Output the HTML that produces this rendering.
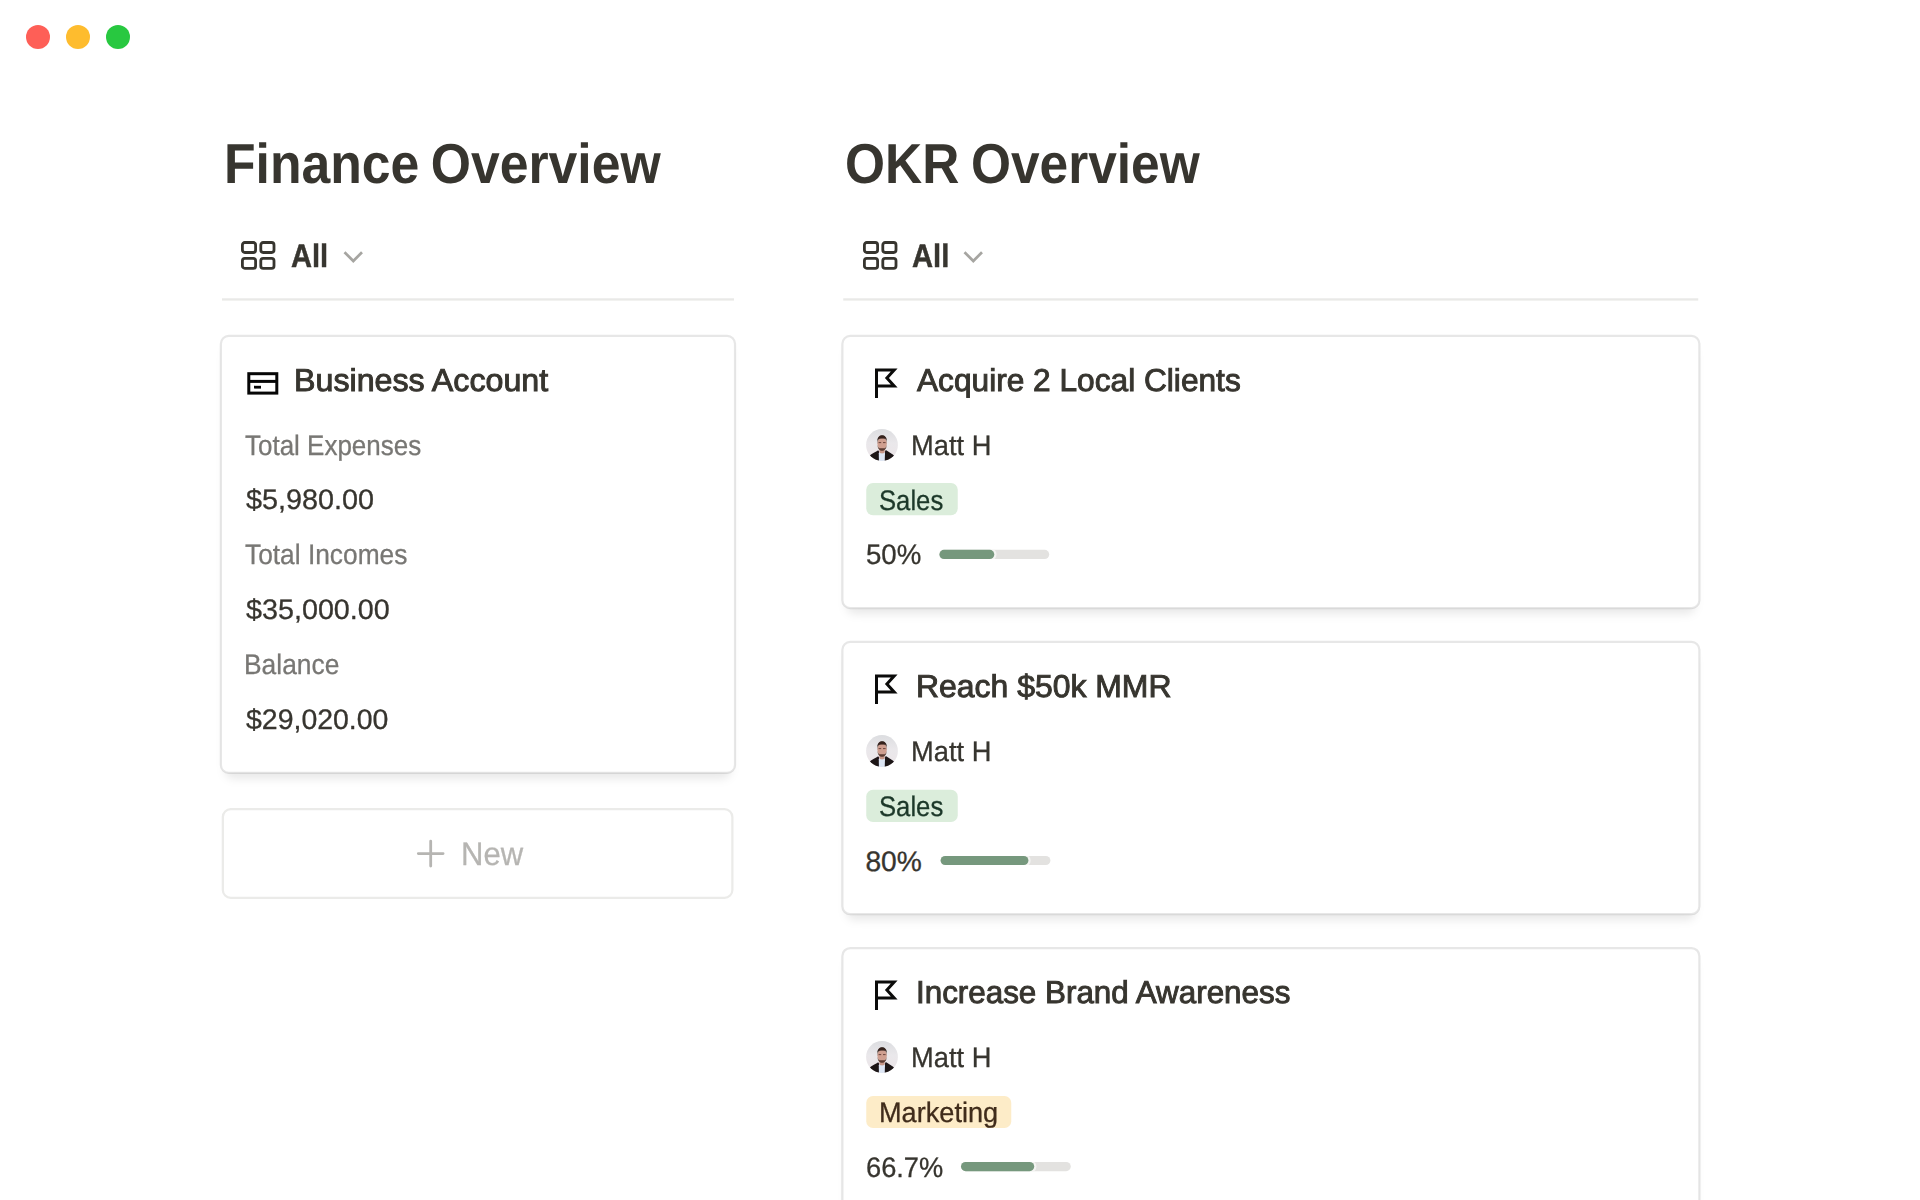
<!DOCTYPE html>
<html>
<head>
<meta charset="utf-8">
<title>Overview</title>
<style>
html,body{margin:0;padding:0;background:#fff;}
body{text-rendering:geometricPrecision;width:1920px;height:1200px;position:relative;overflow:hidden;font-family:"Liberation Sans",sans-serif;}
.t{position:absolute;white-space:nowrap;line-height:1;transform-origin:0 0;}
.dot{position:absolute;width:24px;height:24px;border-radius:50%;top:25px;}
svg{position:absolute;overflow:visible;}
</style>
</head>
<body>
<svg style="left:0;top:0" width="1920" height="1200" viewBox="0 0 1920 1200"><defs><filter id="sh" x="-5%" y="-10%" width="110%" height="130%"><feGaussianBlur in="SourceAlpha" stdDeviation="4"/><feOffset dy="4.5" result="b"/><feFlood flood-color="#0f0f0f" flood-opacity="0.085"/><feComposite in2="b" operator="in"/></filter></defs><rect x="222" y="298.3" width="512" height="2.3" fill="#e9e9e7"/><rect x="843.25" y="298.3" width="855" height="2.3" fill="#e9e9e7"/><rect x="224.75" y="340.75" width="506.40" height="433.20" rx="9.0" fill="#fff" filter="url(#sh)"/><rect x="220.875" y="335.875" width="514.150" height="436.950" rx="7.875" fill="#fff" stroke="rgba(15,15,15,.1)" stroke-width="2.25"/><rect x="222.83" y="809.12" width="509.55" height="88.75" rx="7.9" fill="#fff" stroke="#ebebe9" stroke-width="2.25"/><rect x="846.25" y="340.75" width="849.25" height="268.50" rx="9.0" fill="#fff" filter="url(#sh)"/><rect x="842.375" y="335.875" width="857.000" height="272.250" rx="7.875" fill="#fff" stroke="rgba(15,15,15,.1)" stroke-width="2.25"/><rect x="866.25" y="483.10" width="91.5" height="32.1" rx="6.75" fill="#dbeddb"/><rect x="939.4" y="549.80" width="109.8" height="9.2" rx="4.6" fill="#e3e2e0"/><rect x="939.39" y="547.80" width="57.10" height="13.2" rx="6.6" fill="#f4f4f2" clip-path="url(#bc0)"/><clipPath id="bc0"><rect x="939.4" y="549.80" width="109.8" height="9.2" rx="4.6"/></clipPath><rect x="939.4" y="549.80" width="54.90" height="9.2" rx="4.6" fill="#76987d"/><rect x="846.25" y="646.85" width="849.25" height="268.50" rx="9.0" fill="#fff" filter="url(#sh)"/><rect x="842.375" y="641.975" width="857.000" height="272.250" rx="7.875" fill="#fff" stroke="rgba(15,15,15,.1)" stroke-width="2.25"/><rect x="866.25" y="789.80" width="91.5" height="32.1" rx="6.75" fill="#dbeddb"/><rect x="940.6" y="855.90" width="109.8" height="9.2" rx="4.6" fill="#e3e2e0"/><rect x="940.59" y="853.90" width="90.04" height="13.2" rx="6.6" fill="#f4f4f2" clip-path="url(#bc1)"/><clipPath id="bc1"><rect x="940.6" y="855.90" width="109.8" height="9.2" rx="4.6"/></clipPath><rect x="940.6" y="855.90" width="87.84" height="9.2" rx="4.6" fill="#76987d"/><rect x="846.25" y="952.95" width="849.25" height="268.50" rx="9.0" fill="#fff" filter="url(#sh)"/><rect x="842.375" y="948.075" width="857.000" height="272.250" rx="7.875" fill="#fff" stroke="rgba(15,15,15,.1)" stroke-width="2.25"/><rect x="866.25" y="1095.90" width="145" height="32.1" rx="6.75" fill="#fdecc8"/><rect x="961" y="1162.00" width="109.8" height="9.2" rx="4.6" fill="#e3e2e0"/><rect x="960.99" y="1160.00" width="75.44" height="13.2" rx="6.6" fill="#f4f4f2" clip-path="url(#bc2)"/><clipPath id="bc2"><rect x="961" y="1162.00" width="109.8" height="9.2" rx="4.6"/></clipPath><rect x="961" y="1162.00" width="73.24" height="9.2" rx="4.6" fill="#76987d"/></svg>
<svg class="flag" style="left:872px;top:365.00px" width="30" height="36" viewBox="0 0 30 36"><path d="M4.5 33 V5 H22.2 L14.9 13.1 L22.2 21.1 H4.5" fill="none" stroke="#0b0b0a" stroke-width="3" stroke-linejoin="miter"/></svg>
<svg class="av" style="left:866.2px;top:428.50px" width="32" height="32" viewBox="0 0 32 32"><use href="#avatar"/></svg>
<svg class="flag" style="left:872px;top:671.10px" width="30" height="36" viewBox="0 0 30 36"><path d="M4.5 33 V5 H22.2 L14.9 13.1 L22.2 21.1 H4.5" fill="none" stroke="#0b0b0a" stroke-width="3" stroke-linejoin="miter"/></svg>
<svg class="av" style="left:866.2px;top:734.60px" width="32" height="32" viewBox="0 0 32 32"><use href="#avatar"/></svg>
<svg class="flag" style="left:872px;top:977.20px" width="30" height="36" viewBox="0 0 30 36"><path d="M4.5 33 V5 H22.2 L14.9 13.1 L22.2 21.1 H4.5" fill="none" stroke="#0b0b0a" stroke-width="3" stroke-linejoin="miter"/></svg>
<svg class="av" style="left:866.2px;top:1040.70px" width="32" height="32" viewBox="0 0 32 32"><use href="#avatar"/></svg>
<svg width="0" height="0" style="position:absolute"><defs>
<g id="avatar">
<clipPath id="avc"><circle cx="16" cy="16" r="15.9"/></clipPath>
<linearGradient id="avbg" x1="0" y1="0" x2="0" y2="1"><stop offset="0" stop-color="#dcdde0"/><stop offset=".45" stop-color="#eae8eb"/><stop offset="1" stop-color="#ece5e8"/></linearGradient>
<filter id="avb" x="-10%" y="-10%" width="120%" height="120%"><feGaussianBlur stdDeviation="0.45"/></filter>
<g clip-path="url(#avc)">
<rect width="32" height="32" fill="url(#avbg)"/>
<g filter="url(#avb)">
<path d="M3 27 C6 24.5 10 22.6 12.2 21.2 L14 24 L18.2 24 L19.8 20.9 C22 22.4 26 24.5 28.6 27 L29 34 L3 34 Z" fill="#1b1317"/>
<path d="M12.8 24.3 L13.6 21.6 L18.6 21.6 L19 24.3 L18.7 33 L12.9 33 Z" fill="#dde6f4"/>
<path d="M13.5 20 L18.6 20 L18.8 23.2 C17.5 24.8 14.6 24.8 13.3 23.2 Z" fill="#c79788"/>
<ellipse cx="16.1" cy="14.4" rx="4.7" ry="6.3" fill="#cf9f90"/>
<path d="M11.3 15 C10.2 3.6 22 3.6 20.9 15 C20.7 12.4 20.4 10.6 19 9.9 C17 9.5 15 9.6 13.2 10 C11.9 10.8 11.6 12.6 11.3 15Z" fill="#38272390"/>
<path d="M11.4 12 C11 4.2 21.2 4.2 20.8 12 C20.2 9.8 19.4 9.6 18.6 9.5 C16.8 9.2 15 9.3 13.4 9.7 C12.4 10 11.9 10.4 11.4 12Z" fill="#35241f"/>
<path d="M12.6 13.6 H15.2 M17 13.6 H19.6" stroke="#6a463c" stroke-width="1" fill="none"/>
<path d="M11.4 15.4 C11.6 24 20.6 24 20.8 15.4 C20.5 18.8 19 19.6 16.1 19.3 C13.2 19.6 11.7 18.8 11.4 15.4Z" fill="#5a3b30"/>
</g>
</g></g>
</defs></svg>
<div class="dot" style="left:26px;background:#fe5f57"></div>
<div class="dot" style="left:66px;background:#febc2e"></div>
<div class="dot" style="left:106px;background:#28c840"></div>
<!-- gallery icons -->
<svg style="left:241px;top:241px" width="35" height="29" viewBox="0 0 35 29" fill="none" stroke="#37352f" stroke-width="2.8"><rect x="1.4" y="1.5" width="13.2" height="10" rx="2.4"/><rect x="19.8" y="1.5" width="13.2" height="10" rx="2.4"/><rect x="1.4" y="17.3" width="13.2" height="10" rx="2.4"/><rect x="19.8" y="17.3" width="13.2" height="10" rx="2.4"/></svg>
<svg style="left:862.5px;top:241px" width="35" height="29" viewBox="0 0 35 29" fill="none" stroke="#37352f" stroke-width="2.8"><rect x="1.4" y="1.5" width="13.2" height="10" rx="2.4"/><rect x="19.8" y="1.5" width="13.2" height="10" rx="2.4"/><rect x="1.4" y="17.3" width="13.2" height="10" rx="2.4"/><rect x="19.8" y="17.3" width="13.2" height="10" rx="2.4"/></svg>
<!-- chevrons -->
<svg style="left:343px;top:249.5px" width="21" height="14" viewBox="0 0 21 14" fill="none" stroke="#a6a5a1" stroke-width="2.7"><path d="M1.5 2.2 L10.3 11 L19 2.2"/></svg>
<svg style="left:963.2px;top:249.5px" width="21" height="14" viewBox="0 0 21 14" fill="none" stroke="#a6a5a1" stroke-width="2.7"><path d="M1.5 2.2 L10.3 11 L19 2.2"/></svg>
<!-- credit card icon -->
<svg style="left:247.3px;top:372px" width="32" height="23" viewBox="0 0 32 23" fill="none" stroke="#060606" stroke-width="3"><rect x="1.8" y="1.7" width="28" height="19.4"/><path d="M1.8 9.4 H29.8"/><path d="M7 15.2 H14" stroke-width="2.8"/></svg>
<!-- plus icon -->
<svg style="left:416px;top:839px" width="30" height="30" viewBox="0 0 30 30" fill="none" stroke="#b6b5b2" stroke-width="2.8" stroke-linecap="round"><path d="M14.7 2.2 V27 M2.3 14.6 H27.1"/></svg>

<div class="t" style="left:224.12px;top:136.00px;font-size:56.4px;color:#37352f;transform:scale(0.9168,1);font-weight:700;word-spacing:-3.3px;">Finance Overview</div>
<div class="t" style="left:844.68px;top:136.00px;font-size:56.4px;color:#37352f;transform:scale(0.9119,1);font-weight:700;word-spacing:-2.8px;">OKR Overview</div>
<div class="t" style="left:290.68px;top:240.00px;font-size:32.6px;color:#37352f;transform:scale(0.8939,1);font-weight:700;-webkit-text-stroke:0.45px #37352f;">All</div>
<div class="t" style="left:911.98px;top:240.00px;font-size:32.6px;color:#37352f;transform:scale(0.8958,1);font-weight:700;-webkit-text-stroke:0.45px #37352f;">All</div>
<div class="t" style="left:294.35px;top:365.00px;font-size:31.6px;color:#37352f;transform:scale(1.0191,1);-webkit-text-stroke:0.95px #37352f;">Business Account</div>
<div class="t" style="left:245.14px;top:431.00px;font-size:28.2px;color:#787774;transform:scale(0.9216,1);-webkit-text-stroke:0.3px #787774;">Total Expenses</div>
<div class="t" style="left:245.55px;top:485.00px;font-size:28.2px;color:#37352f;transform:scale(1.0218,1);-webkit-text-stroke:0.3px #37352f;">$5,980.00</div>
<div class="t" style="left:245.14px;top:540.00px;font-size:28.2px;color:#787774;transform:scale(0.9337,1);-webkit-text-stroke:0.3px #787774;">Total Incomes</div>
<div class="t" style="left:245.75px;top:595.00px;font-size:28.2px;color:#37352f;transform:scale(1.0192,1);-webkit-text-stroke:0.3px #37352f;">$35,000.00</div>
<div class="t" style="left:243.67px;top:650.00px;font-size:28.2px;color:#787774;transform:scale(0.9366,1);-webkit-text-stroke:0.3px #787774;">Balance</div>
<div class="t" style="left:245.55px;top:705.00px;font-size:28.2px;color:#37352f;transform:scale(1.0095,1);-webkit-text-stroke:0.3px #37352f;">$29,020.00</div>
<div class="t" style="left:460.94px;top:838.00px;font-size:32.6px;color:#b6b5b2;transform:scale(0.9522,1);-webkit-text-stroke:0.3px #b6b5b2;">New</div>
<div class="t" style="left:917.05px;top:365.00px;font-size:31.6px;color:#37352f;transform:scale(1.0018,1);-webkit-text-stroke:0.95px #37352f;">Acquire 2 Local Clients</div>
<div class="t" style="left:911.21px;top:431.00px;font-size:28.2px;color:#37352f;transform:scale(0.9680,1);-webkit-text-stroke:0.3px #37352f;">Matt H</div>
<div class="t" style="left:879.23px;top:486.00px;font-size:28.2px;color:#1c3829;transform:scale(0.9108,1);-webkit-text-stroke:0.3px #1c3829;">Sales</div>
<div class="t" style="left:865.81px;top:540.00px;font-size:28.2px;color:#37352f;transform:scale(0.9806,1);-webkit-text-stroke:0.3px #37352f;">50%</div>
<div class="t" style="left:915.71px;top:671.00px;font-size:31.6px;color:#37352f;transform:scale(1.0104,1);-webkit-text-stroke:0.95px #37352f;">Reach $50k MMR</div>
<div class="t" style="left:911.21px;top:737.00px;font-size:28.2px;color:#37352f;transform:scale(0.9680,1);-webkit-text-stroke:0.3px #37352f;">Matt H</div>
<div class="t" style="left:879.23px;top:792.00px;font-size:28.2px;color:#1c3829;transform:scale(0.9108,1);-webkit-text-stroke:0.3px #1c3829;">Sales</div>
<div class="t" style="left:865.40px;top:847.00px;font-size:28.2px;color:#37352f;transform:scale(1.0000,1);-webkit-text-stroke:0.3px #37352f;">80%</div>
<div class="t" style="left:915.99px;top:977.00px;font-size:31.6px;color:#37352f;transform:scale(0.9929,1);-webkit-text-stroke:0.95px #37352f;">Increase Brand Awareness</div>
<div class="t" style="left:911.21px;top:1043.00px;font-size:28.2px;color:#37352f;transform:scale(0.9680,1);-webkit-text-stroke:0.3px #37352f;">Matt H</div>
<div class="t" style="left:878.82px;top:1098.00px;font-size:28.2px;color:#402c1b;transform:scale(0.9628,1);-webkit-text-stroke:0.3px #402c1b;">Marketing</div>
<div class="t" style="left:865.68px;top:1153.00px;font-size:28.2px;color:#37352f;transform:scale(0.9664,1);-webkit-text-stroke:0.3px #37352f;">66.7%</div>
</body>
</html>
